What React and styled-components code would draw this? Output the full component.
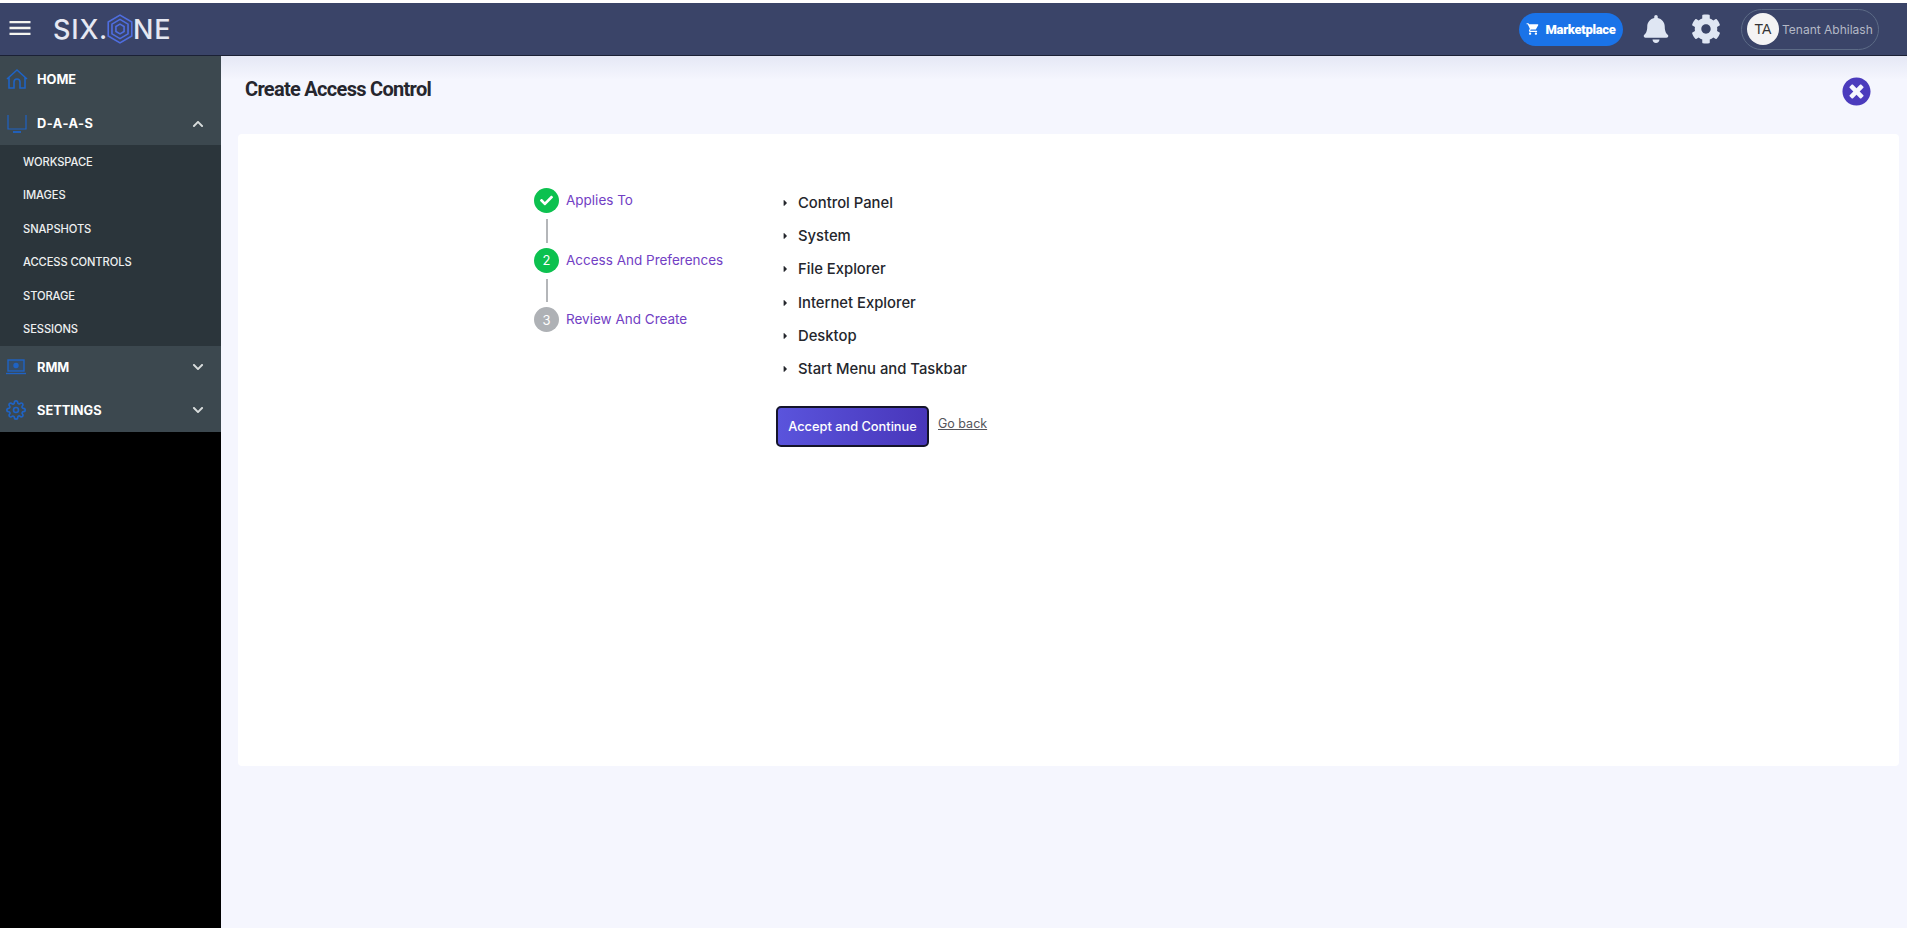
import React from 'react';
import styled, { createGlobalStyle } from 'styled-components';
import { FaBell, FaCog, FaTimesCircle, FaCaretRight, FaChevronUp, FaChevronDown, FaCheck } from 'react-icons/fa';
import { MdShoppingCart, MdMenu } from 'react-icons/md';
import { FiSettings } from 'react-icons/fi';

const GlobalStyle = createGlobalStyle`
    html, body {
        margin: 0;
        padding: 0;
        height: 100%;
        background: #fff;
        font-family: Inter, "Noto Sans", sans-serif;
    }
    #root {
        height: 100%;
    }
`;

const Page = styled.div`
    height: 928px;
    padding-top: 3px;
    box-sizing: border-box;
    display: flex;
    flex-direction: column;
    overflow: hidden;
`;

const Header = styled.header`
    height: 53px;
    flex: none;
    box-sizing: border-box;
    background: #3a4468;
    border-bottom: 1px solid #1b2135;
    display: flex;
    align-items: center;
    padding: 0 28px 0 6px;
    color: #fff;
`;

const Burger = styled(MdMenu)`
    font-size: 28px;
    color: #f4f4ef;
    margin-top: -3px;
`;

const Logo = styled.div`
    display: flex;
    align-items: center;
    margin-left: 19px;
    font-size: 27px;
    font-weight: 500;
    color: #e6e8f2;
    letter-spacing: 0.8px;
`;

const LogoMark = styled.svg`
    width: 26px;
    height: 30px;
    margin: 0 0 0 -1px;
`;

const HeaderRight = styled.div`
    margin-left: auto;
    display: flex;
    align-items: center;
`;

const MarketButton = styled.div`
    width: 104px;
    height: 33px;
    border-radius: 17px;
    background: #1a73e8;
    display: flex;
    align-items: center;
    justify-content: center;
    gap: 5px;
    font-family: Roboto, sans-serif;
    font-weight: 900;
    font-size: 13px;
    letter-spacing: -0.3px;
    color: #fff;
`;

const BellIcon = styled(FaBell)`
    font-size: 28px;
    color: #dfe6f3;
    margin-left: 19px;
`;

const GearIcon = styled(FaCog)`
    font-size: 30px;
    color: #dfe6f3;
    margin-left: 21px;
`;

const UserPill = styled.div`
    width: 138px;
    height: 41px;
    box-sizing: border-box;
    margin-left: 20px;
    border: 1px solid #5c6b86;
    border-radius: 21px;
    display: flex;
    align-items: center;
    padding-left: 5px;
    gap: 3px;
    font-size: 12px;
    color: #b4b9c6;
    white-space: nowrap;
`;

const Avatar = styled.div`
    width: 32px;
    height: 32px;
    border-radius: 50%;
    background: #f4f4f4;
    color: #333;
    font-family: "Liberation Sans", sans-serif;
    font-size: 14px;
    display: flex;
    align-items: center;
    justify-content: center;
    flex: none;
`;

const Body = styled.div`
    flex: 1;
    display: flex;
    min-height: 0;
`;

const Sidebar = styled.aside`
    width: 221px;
    flex: none;
    background: #000;
`;

const NavRow = styled.div`
    height: ${p => p.$h}px;
    background: #3c484f;
    display: flex;
    align-items: center;
    padding: 0 17px 0 6px;
    color: #fff;
    font-weight: 700;
    font-size: 12.8px;
`;

const NavIconBox = styled.span`
    width: 30px;
    display: flex;
    align-items: center;
    color: #1f63c4;
    font-size: 20px;
`;

const NavLabel = styled.span`
    flex: 1;
    margin-left: 1px;
    letter-spacing: ${p => p.$spread ? '0.5px' : '0'};
`;

const Chevron = styled.span`
    color: #d8dcdc;
    font-size: 12px;
    display: flex;
`;

const SubMenu = styled.div`
    height: 201px;
    background: #2b353b;
    display: flex;
    flex-direction: column;
    justify-content: space-around;
    padding-left: 23px;
    box-sizing: border-box;
`;

const SubItem = styled.div`
    color: #eef0f0;
    font-size: 11.2px;
    font-weight: 500;
    letter-spacing: -0.1px;
`;

const Main = styled.main`
    flex: 1;
    min-width: 0;
    background: linear-gradient(#e5e8f5, #f5f6fe 24px);
`;

const TitleRow = styled.div`
    height: 78px;
    display: flex;
    align-items: flex-start;
    justify-content: space-between;
    padding: 21px 36px 0 24px;
    box-sizing: border-box;
`;

const Title = styled.h1`
    margin: 0;
    font-family: Roboto, sans-serif;
    font-weight: 700;
    font-size: 20px;
    line-height: 24px;
    letter-spacing: -0.7px;
    color: #26262e;
`;

const CloseIcon = styled(FaTimesCircle)`
    font-size: 29px;
    color: #4b3bbd;
`;

const Card = styled.section`
    height: 632px;
    margin: 0 8px 0 17px;
    background: #fff;
    border-radius: 4px;
    display: flex;
    padding: 54px 0 0 296px;
    box-sizing: border-box;
`;

const Stepper = styled.div`
    width: 242px;
    flex: none;
`;

const Step = styled.div`
    display: flex;
    align-items: center;
    gap: 7px;
    height: 25px;
`;

const StepCircle = styled.div`
    width: 25px;
    height: 25px;
    border-radius: 50%;
    background: ${p => p.$color};
    color: #fff;
    font-size: 13px;
    display: flex;
    align-items: center;
    justify-content: center;
    flex: none;
`;

const StepLabel = styled.span`
    color: #7240c4;
    font-size: 13.5px;
    margin-top: -1px;
`;

const Connector = styled.div`
    width: 2px;
    height: 23.5px;
    margin: 6px 0 5px 12px;
    background: #b4b6b9;
`;

const Content = styled.div`
    display: flex;
    flex-direction: column;
    margin-top: -2px;
`;

const TreeList = styled.ul`
    list-style: none;
    margin: 0;
    padding: 0 0 0 5px;
`;

const TreeItem = styled.li`
    height: 33.3px;
    display: flex;
    align-items: center;
    gap: 8px;
    font-size: 14.8px;
    font-weight: 450;
    color: #24262c;
`;

const Caret = styled(FaCaretRight)`
    font-size: 10px;
    color: #24262c;
    width: 9px;
`;

const Actions = styled.div`
    display: flex;
    align-items: flex-start;
    gap: 9px;
    margin-top: 20px;
`;

const AcceptButton = styled.button`
    width: 153px;
    height: 41px;
    border: 2px solid #14142a;
    border-radius: 5px;
    background: linear-gradient(90deg, #5a54dc, #4836ba);
    color: #fff;
    font-family: inherit;
    font-weight: 500;
    font-size: 12.8px;
    padding: 0;
`;

const GoBack = styled.a`
    color: #55565c;
    font-size: 12.5px;
    text-decoration: underline;
    margin-top: 10px;
`;

const HomeGlyph = () => (
    <svg width="22" height="22" viewBox="0 0 22 22" fill="none" stroke="currentColor" strokeWidth="1.6">
        <path d="M1 11 L11 2 L21 11 M3 9.5 V20 H8 V14 A3 3 0 0 1 14 14 V20 H19 V9.5" />
    </svg>
);

const ScreenGlyph = () => (
    <svg width="22" height="20" viewBox="0 0 22 20" fill="none" stroke="currentColor" strokeWidth="1.2">
        <path d="M2 1 V15 H20 V1" />
        <path d="M7 18 H15" strokeWidth="1.8" />
    </svg>
);

const LaptopGlyph = () => (
    <svg width="20" height="16" viewBox="0 0 20 16" fill="none" stroke="currentColor" strokeWidth="1.4">
        <rect x="2" y="1" width="16" height="11" fill="#1f63c433" />
        <circle cx="10" cy="6.5" r="2" fill="currentColor" />
        <path d="M0 14.5 H20" />
    </svg>
);

const steps = [
    { key: 1, label: 'Applies To', color: '#0cc14f', icon: <FaCheck size={13} /> },
    { key: 2, label: 'Access And Preferences', color: '#0cc14f', icon: '2' },
    { key: 3, label: 'Review And Create', color: '#aeb1b5', icon: '3' },
];

const subItems = ['WORKSPACE', 'IMAGES', 'SNAPSHOTS', 'ACCESS CONTROLS', 'STORAGE', 'SESSIONS'];
const treeItems = ['Control Panel', 'System', 'File Explorer', 'Internet Explorer', 'Desktop', 'Start Menu and Taskbar'];

const App = () => {
    return (
        <Page>
            <GlobalStyle />
            <Header>
                <Burger />
                <Logo>
                    SIX.
                    <LogoMark viewBox="0 0 24 28" fill="none" stroke="#4f6ee0" strokeWidth="1.5">
                        <path d="M12 1 L23 7.5 V20.5 L12 27 L1 20.5 V7.5 Z" />
                        <path d="M12 5 L19.5 9.5 V18.5 L12 23 L4.5 18.5 V9.5 Z" />
                        <path d="M12 9.5 L15.8 11.7 V16.3 L12 18.5 L8.2 16.3 V11.7 Z" />
                    </LogoMark>
                    NE
                </Logo>
                <HeaderRight>
                    <MarketButton><MdShoppingCart size={14} />Marketplace</MarketButton>
                    <BellIcon />
                    <GearIcon />
                    <UserPill>
                        <Avatar>TA</Avatar>
                        Tenant Abhilash
                    </UserPill>
                </HeaderRight>
            </Header>
            <Body>
                <Sidebar>
                    <NavRow $h={46}>
                        <NavIconBox><HomeGlyph /></NavIconBox>
                        <NavLabel>HOME</NavLabel>
                    </NavRow>
                    <NavRow $h={43}>
                        <NavIconBox><ScreenGlyph /></NavIconBox>
                        <NavLabel $spread>D-A-A-S</NavLabel>
                        <Chevron><FaChevronUp /></Chevron>
                    </NavRow>
                    <SubMenu>
                        {subItems.map(item => <SubItem key={item}>{item}</SubItem>)}
                    </SubMenu>
                    <NavRow $h={42}>
                        <NavIconBox><LaptopGlyph /></NavIconBox>
                        <NavLabel>RMM</NavLabel>
                        <Chevron><FaChevronDown /></Chevron>
                    </NavRow>
                    <NavRow $h={44}>
                        <NavIconBox><FiSettings size={20} /></NavIconBox>
                        <NavLabel>SETTINGS</NavLabel>
                        <Chevron><FaChevronDown /></Chevron>
                    </NavRow>
                </Sidebar>
                <Main>
                    <TitleRow>
                        <Title>Create Access Control</Title>
                        <CloseIcon />
                    </TitleRow>
                    <Card>
                        <Stepper>
                            {steps.map((step, i) => (
                                <React.Fragment key={step.key}>
                                    <Step>
                                        <StepCircle $color={step.color}>{step.icon}</StepCircle>
                                        <StepLabel>{step.label}</StepLabel>
                                    </Step>
                                    {i < steps.length - 1 && <Connector />}
                                </React.Fragment>
                            ))}
                        </Stepper>
                        <Content>
                            <TreeList>
                                {treeItems.map(item => (
                                    <TreeItem key={item}><Caret />{item}</TreeItem>
                                ))}
                            </TreeList>
                            <Actions>
                                <AcceptButton>Accept and Continue</AcceptButton>
                                <GoBack>Go back</GoBack>
                            </Actions>
                        </Content>
                    </Card>
                </Main>
            </Body>
        </Page>
    );
};

export default App;
